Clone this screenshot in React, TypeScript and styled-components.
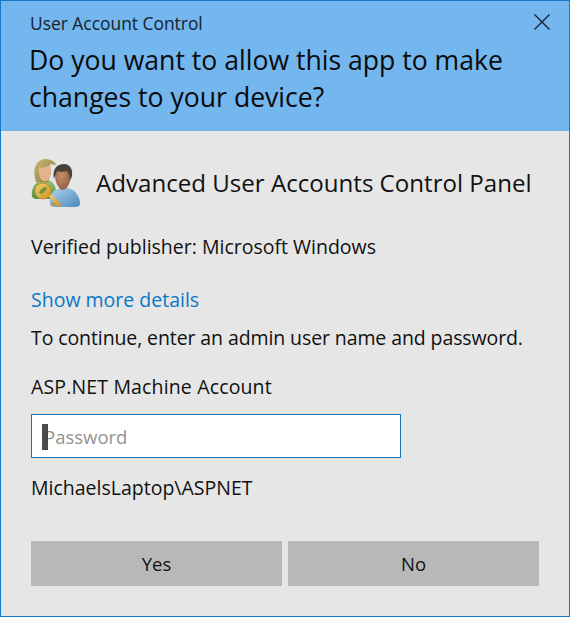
import React from 'react';
import styled, { createGlobalStyle } from 'styled-components';

const GlobalStyle = createGlobalStyle`
  html, body {
    margin: 0;
    padding: 0;
    background: #e6e6e6;
  }
  * {
    box-sizing: border-box;
  }
`;

const Dialog = styled.div`
  width: 570px;
  height: 617px;
  border: 1px solid #1479c9;
  background: #e6e6e6;
  color: #111;
  font-family: 'Open Sans', 'Noto Sans', 'Liberation Sans', sans-serif;
  display: flex;
  flex-direction: column;
`;

const Header = styled.header`
  position: relative;
  height: 130px;
  background: #74b6ee;
  padding: 11px 28px 0;
`;

const Caption = styled.div`
  font-size: 17.4px;
  line-height: 23px;
  color: #14222e;
  margin-left: 1px;
`;

const Question = styled.h1`
  margin: 7px 0 0;
  font-size: 26.6px;
  font-weight: 400;
  line-height: 37px;
  color: #0b0b0b;
`;

const CloseButton = styled.button`
  position: absolute;
  top: 12px;
  right: 18px;
  width: 18px;
  height: 18px;
  padding: 0;
  border: 0;
  background: none;
  display: block;
`;

const Body = styled.main`
  flex: 1;
  padding: 0 30px;
  display: flex;
  flex-direction: column;
`;

const AppRow = styled.div`
  display: flex;
  align-items: center;
  gap: 14px;
  margin-top: 25px;
  height: 54px;
`;

const AppName = styled.div`
  font-size: 24.1px;
  line-height: 32px;
`;

const Line = styled.div<{ $top: number; $spacing?: number }>`
  margin-top: ${({ $top }) => $top}px;
  font-size: 19.5px;
  line-height: 26px;
  white-space: nowrap;
  letter-spacing: ${({ $spacing }) => $spacing ?? 0}px;
`;

const MoreLink = styled.a`
  display: block;
  margin-top: 27px;
  font-size: 19.5px;
  line-height: 26px;
  color: #0a78c8;
`;

const PasswordBox = styled.div`
  position: relative;
  margin-top: 14px;
  width: 370px;
  height: 44px;
  border: 1px solid #1a73b5;
  background: #fff;
  padding-left: 12px;
  font-size: 18.5px;
  line-height: 44px;
  color: #929292;
`;

const Caret = styled.span`
  position: absolute;
  left: 10px;
  top: 9px;
  width: 6px;
  height: 26px;
  background: #3d3d3d;
  opacity: 0.92;
`;

const Buttons = styled.div`
  display: flex;
  gap: 6px;
  margin-top: 40px;
`;

const ActionButton = styled.button`
  width: 251px;
  height: 45px;
  padding: 0;
  border: 0;
  background: #b8b8b8;
  color: #111;
  font-family: inherit;
  font-size: 18.5px;
`;

const UsersIcon = () => (
  <svg width="51" height="52" viewBox="0 0 51 52">
    <defs>
      <linearGradient id="shirtBlue" x1="0" y1="0" x2="1" y2="1">
        <stop offset="0" stopColor="#b4d6ec" />
        <stop offset="1" stopColor="#4a89bf" />
      </linearGradient>
      <linearGradient id="shirtGreen" x1="0" y1="0" x2="0" y2="1">
        <stop offset="0" stopColor="#9cc07a" />
        <stop offset="1" stopColor="#5c8c42" />
      </linearGradient>
      <linearGradient id="hairBlond" x1="0" y1="0" x2="1" y2="1">
        <stop offset="0" stopColor="#c9b878" />
        <stop offset="1" stopColor="#8a7a3c" />
      </linearGradient>
      <radialGradient id="faceDark" cx="0.4" cy="0.4" r="0.7">
        <stop offset="0" stopColor="#c4906c" />
        <stop offset="1" stopColor="#8a5638" />
      </radialGradient>
      <linearGradient id="keyGold" x1="0" y1="0" x2="1" y2="1">
        <stop offset="0" stopColor="#f2d468" />
        <stop offset="1" stopColor="#cf9024" />
      </linearGradient>
      <filter id="soft" x="-10%" y="-10%" width="120%" height="120%">
        <feGaussianBlur stdDeviation="0.4" />
      </filter>
    </defs>
    <g filter="url(#soft)">
      <path d="M1 40c-1-9 3-16 11-17 7-1 12 3 13 10l-1 9H4z" fill="url(#shirtGreen)" />
      <path d="M5 25C1 13 4 3 14 2c5 0 10 2 11 6l-6-1 1 9-3 9z" fill="url(#hairBlond)" />
      <path d="M8 10c4 1 8 0 11-2 2 5 1 11-1 14-2 3-6 3-8 0-2-3-3-8-2-12z" fill="#e3b48c" />
      <path d="M19 47c-1-5 1-11 5-14l8-3 8 2c6 3 9 9 9 15 0 2-2 3-5 3H23c-2 0-4-1-4-3z" fill="url(#shirtBlue)" />
      <path d="M24 18c0-6 3-9 8-9 6 0 9 4 8 10-1 6-3 13-8 14-4 0-8-7-8-15z" fill="url(#faceDark)" />
      <path d="M23 22c-2-10 3-15 10-15 6 0 9 5 8 12l-2 5c0-5-1-8-3-10-3 1-7 1-10 0-1 2-2 5-3 8z" fill="#4a4038" />
      <path d="M17 39l11 11 2.500-2.500-11-11z" fill="url(#keyGold)" />
      <path d="M23 45l-2.500 2.500 2 2 2.500-2.500z" fill="#cf9024" />
      <circle cx="12" cy="34" r="8" fill="url(#keyGold)" stroke="#b98a25" strokeWidth="0.8" />
      <ellipse cx="12" cy="33.500" rx="4.500" ry="2" fill="#76913f" transform="rotate(-40 12 33.500)" />
    </g>
  </svg>
);

const App: React.FC = () => {
  return (
    <>
      <GlobalStyle />
      <Dialog>
        <Header>
          <Caption>User Account Control</Caption>
          <Question>
            Do you want to allow this app to make
            <br />
            changes to your device?
          </Question>
          <CloseButton aria-label="Close">
            <svg width="18" height="18" viewBox="0 0 18 18">
              <path d="M1.500 1.500l15 15M16.500 1.500l-15 15" stroke="#14222e" strokeWidth="1.400" fill="none" />
            </svg>
          </CloseButton>
        </Header>
        <Body>
          <AppRow>
            <UsersIcon />
            <AppName>Advanced User Accounts Control Panel</AppName>
          </AppRow>
          <Line $top={24}>Verified publisher: Microsoft Windows</Line>
          <MoreLink>Show more details</MoreLink>
          <Line $top={12} $spacing={-0.1}>To continue, enter an admin user name and password.</Line>
          <Line $top={23} $spacing={0.15}>ASP.NET Machine Account</Line>
          <PasswordBox>
            <Caret />
            Password
          </PasswordBox>
          <Line $top={17}>MichaelsLaptop\ASPNET</Line>
          <Buttons>
            <ActionButton>Yes</ActionButton>
            <ActionButton>No</ActionButton>
          </Buttons>
        </Body>
      </Dialog>
    </>
  );
};

export default App;
